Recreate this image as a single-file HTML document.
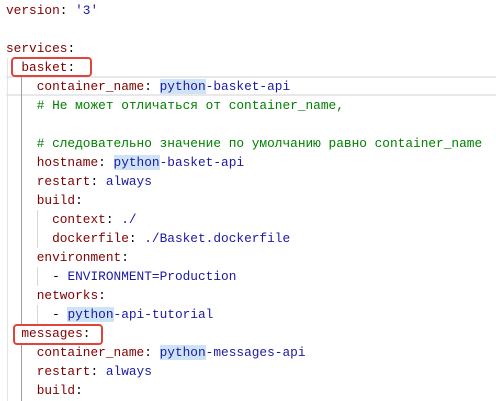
<!DOCTYPE html>
<html><head><meta charset="utf-8"><style>
html,body{margin:0;padding:0;background:#fff;width:496px;height:401px;overflow:hidden;position:relative}
.l{position:absolute;left:6px;height:19px;line-height:19px;font-family:"Liberation Mono",monospace;font-size:12.8px;white-space:pre;color:#000}
.k{color:#800000}.v{color:#1a1aa6}.c{color:#008000}.p{color:#000}
.h{background:#cfe3f7}
.g{position:absolute;width:1px}
.box{position:absolute;border:2px solid #e0443c;border-radius:4px}
.cur{position:absolute;left:6px;right:0;top:76px;height:16px;border-top:2px solid #e8e8e8;border-bottom:2px solid #e8e8e8}
</style></head><body>
<div class="cur"></div>
<div class="g" style="left:7px;top:58px;height:343px;background:#e4e4e4"></div>
<div class="g" style="left:21px;top:77px;height:248px;background:#a0a0a0"></div>
<div class="g" style="left:21px;top:343px;height:58px;background:#a0a0a0"></div>
<div class="g" style="left:37px;top:210px;height:38px;background:#d8d8d8"></div>
<div class="g" style="left:37px;top:267px;height:19px;background:#d8d8d8"></div>
<div class="g" style="left:37px;top:305px;height:19px;background:#d8d8d8"></div>
<div class="l" style="top:1px"><span class="k">version</span><span class="p">: </span><span class="v">'3'</span></div>
<div class="l" style="top:39px"><span class="k">services</span><span class="p">:</span></div>
<div class="l" style="top:58px">  <span class="k">basket</span><span class="p">:</span></div>
<div class="l" style="top:77px">    <span class="k">container_name</span><span class="p">: </span><span class="v"><span class="h">python</span>-basket-api</span></div>
<div class="l" style="top:96px">    <span class="c"># Не может отличаться от container_name,</span></div>
<div class="l" style="top:134px">    <span class="c"># следовательно значение по умолчанию равно container_name</span></div>
<div class="l" style="top:153px">    <span class="k">hostname</span><span class="p">: </span><span class="v"><span class="h">python</span>-basket-api</span></div>
<div class="l" style="top:172px">    <span class="k">restart</span><span class="p">: </span><span class="v">always</span></div>
<div class="l" style="top:191px">    <span class="k">build</span><span class="p">:</span></div>
<div class="l" style="top:210px">      <span class="k">context</span><span class="p">: </span><span class="v">./</span></div>
<div class="l" style="top:229px">      <span class="k">dockerfile</span><span class="p">: </span><span class="v">./Basket.dockerfile</span></div>
<div class="l" style="top:248px">    <span class="k">environment</span><span class="p">:</span></div>
<div class="l" style="top:267px">      <span class="p">- </span><span class="v">ENVIRONMENT=Production</span></div>
<div class="l" style="top:286px">    <span class="k">networks</span><span class="p">:</span></div>
<div class="l" style="top:305px">      <span class="p">- </span><span class="v"><span class="h">python</span>-api-tutorial</span></div>
<div class="l" style="top:324px">  <span class="k">messages</span><span class="p">:</span></div>
<div class="l" style="top:343px">    <span class="k">container_name</span><span class="p">: </span><span class="v"><span class="h">python</span>-messages-api</span></div>
<div class="l" style="top:362px">    <span class="k">restart</span><span class="p">: </span><span class="v">always</span></div>
<div class="l" style="top:381px">    <span class="k">build</span><span class="p">:</span></div>
<div class="box" style="left:11px;top:57px;width:77px;height:16px"></div>
<div class="box" style="left:13px;top:324px;width:86px;height:17px"></div>
</body></html>
